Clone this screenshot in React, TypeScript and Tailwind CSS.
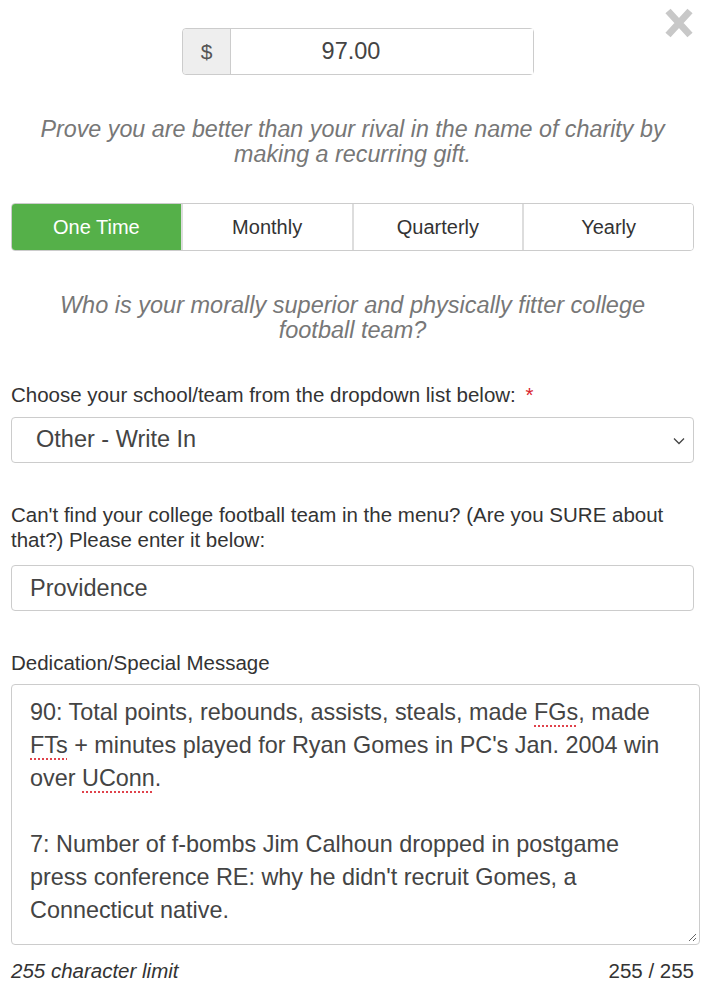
import { useState } from 'react';

const font = { fontFamily: '"Liberation Sans", Arial, sans-serif' };

function Squiggle({ children }: { children: string }) {
  return (
    <span className="underline decoration-dotted decoration-[#e0424b] decoration-2 underline-offset-[5px]">
      {children}
    </span>
  );
}

export default function App() {
  const [freq, setFreq] = useState('One Time');
  const options = ['One Time', 'Monthly', 'Quarterly', 'Yearly'];

  return (
    <div className="relative w-[713px] min-h-[1000px] bg-white text-[#333]" style={font}>
      <button className="absolute right-[18px] top-[6px] text-[#c8c8c8]" aria-label="close">
        <svg width="32" height="34" viewBox="0 0 32 34">
          <path d="M5 5 L27 29 M27 5 L5 29" stroke="currentColor" strokeWidth="7" strokeLinecap="butt" />
        </svg>
      </button>

      <div className="flex flex-col pl-[11px] pr-[19px] pt-[28px]">
        <div className="ml-[171px] flex h-[47px] w-[352px] rounded border border-[#ccc]">
          <span className="flex w-[48px] items-center justify-center rounded-l border-r border-[#ccc] bg-[#eee] text-[21px] text-[#555]">
            $
          </span>
          <input
            defaultValue="97.00"
            className="min-w-0 flex-1 bg-white pr-[62px] text-center text-[23.5px] text-[#444] outline-none"
          />
        </div>

        <p className="mx-auto mt-[42px] w-[640px] text-center text-[23.3px] italic leading-[25px] text-[#777]">
          Prove you are better than your rival in the name of charity by making a recurring gift.
        </p>

        <div className="mt-[36px] flex h-[48px] overflow-hidden rounded-[4px] border border-[#ccc]">
          {options.map((o, i) => (
            <button
              key={o}
              onClick={() => setFreq(o)}
              className={
                'flex-1 text-[20px] ' +
                (i > 0 ? 'border-l-2 border-[#ddd] ' : '') +
                (freq === o ? 'bg-[#55b049] text-white' : 'bg-white text-[#333]')
              }
            >
              {o}
            </button>
          ))}
        </div>

        <p className="mx-auto mt-[42px] w-[620px] text-center text-[23.5px] italic leading-[25px] text-[#777]">
          Who is your morally superior and physically fitter college football team?
        </p>

        <label className="mt-[39px] text-[20.5px] leading-[25px]">
          Choose your school/team from the dropdown list below: <span className="ml-1 text-[#d9232d]">*</span>
        </label>
        <div className="relative mt-[10px] flex h-[46px] items-center rounded-[4px] border border-[#ccc] px-[24px] text-[23.5px] text-[#444]">
          Other - Write In
          <svg className="absolute right-[8px] top-[19px]" width="12" height="8" viewBox="0 0 12 8">
            <path d="M1 1.5 L6 6.5 L11 1.5" fill="none" stroke="#444" strokeWidth="1.3" />
          </svg>
        </div>

        <label className="mt-[39px] text-[20.5px] leading-[25px]">
          Can't find your college football team in the menu? (Are you SURE about that?) Please enter it below:
        </label>
        <input
          defaultValue="Providence"
          className="mt-[13px] h-[46px] rounded-[4px] border border-[#ccc] px-[18px] text-[23.5px] text-[#444] outline-none"
        />

        <label className="mt-[39px] text-[20.5px] leading-[25px]">Dedication/Special Message</label>
        <div className="relative mt-[9px] mr-[-6px] h-[261px] rounded-[4px] border border-[#ccc] px-[18px] pt-[11px] text-[23.4px] leading-[33px] text-[#444]">
          <p>
            90: Total points, rebounds, assists, steals, made <Squiggle>FGs</Squiggle>, made{' '}
            <Squiggle>FTs</Squiggle> + minutes played for Ryan Gomes in PC's Jan. 2004 win over{' '}
            <Squiggle>UConn</Squiggle>.
          </p>
          <p className="mt-[33px]">
            7: Number of f-bombs Jim Calhoun dropped in postgame press conference RE: why he didn't recruit Gomes, a
            Connecticut native.
          </p>
          <svg className="absolute bottom-[2px] right-[2px]" width="10" height="10" viewBox="0 0 10 10">
            <path d="M9 2 L2 9 M9 6 L6 9" stroke="#666" strokeWidth="1" />
          </svg>
        </div>

        <div className="mt-[13px] flex justify-between text-[20.5px] leading-[25px]">
          <span className="italic">255 character limit</span>
          <span>255 / 255</span>
        </div>
      </div>
    </div>
  );
}
